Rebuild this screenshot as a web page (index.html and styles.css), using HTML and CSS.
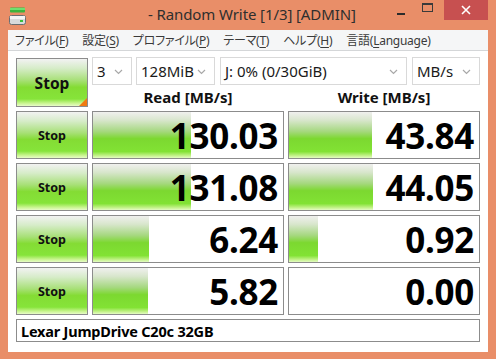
FILE: index.html
```html
<!DOCTYPE html>
<html>
<head>
<meta charset="utf-8">
<link rel="stylesheet" href="styles.css">
</head>
<body>
<div class="window">
  <div class="titlebar">
    <svg class="app-icon" width="17" height="18" viewBox="0 0 17 18">
      <rect x="1" y="0.5" width="15" height="5" rx="1" fill="#3cb43c"/>
      <rect x="1" y="1" width="15" height="2" fill="#6ee06e"/>
      <rect x="0.5" y="8.5" width="16" height="9" rx="2" fill="#d8dadc" stroke="#6a6e72"/>
      <rect x="1" y="9" width="15" height="3" fill="#f4f4f4"/>
      <rect x="11" y="13" width="3" height="2" fill="#38c038"/>
    </svg>
    <div class="title">- Random Write [1/3] [ADMIN]</div>
    <div class="controls">
      <div class="ctl min"><span class="min-line"></span></div>
      <div class="ctl max"><span class="max-box"></span></div>
      <div class="ctl close">
        <svg width="10" height="10" viewBox="0 0 10 10"><path d="M1 1 L9 9 M9 1 L1 9" stroke="#fff" stroke-width="1.6"/></svg>
      </div>
    </div>
  </div>
  <div class="menubar">
    <span class="mi">ファイル(<u>F</u>)</span>
    <span class="mi">設定(<u>S</u>)</span>
    <span class="mi">プロファイル(<u>P</u>)</span>
    <span class="mi">テーマ(<u>T</u>)</span>
    <span class="mi">ヘルプ(<u>H</u>)</span>
    <span class="mi">言語(<u>L</u>anguage)</span>
  </div>
  <div class="client">
    <div class="btn big">Stop</div>
    <div class="top">
      <div class="combos">
        <div class="combo c1"><span>3</span><svg class="chev" width="9" height="6" viewBox="0 0 9 6"><path d="M1 1 L4.5 4.5 L8 1" fill="none" stroke="#a8a8a8" stroke-width="1.2"/></svg></div>
        <div class="combo c2"><span>128MiB</span><svg class="chev" width="9" height="6" viewBox="0 0 9 6"><path d="M1 1 L4.5 4.5 L8 1" fill="none" stroke="#a8a8a8" stroke-width="1.2"/></svg></div>
        <div class="combo c3"><span>J: 0% (0/30GiB)</span><svg class="chev" width="9" height="6" viewBox="0 0 9 6"><path d="M1 1 L4.5 4.5 L8 1" fill="none" stroke="#a8a8a8" stroke-width="1.2"/></svg></div>
        <div class="combo c4"><span>MB/s</span><svg class="chev" width="9" height="6" viewBox="0 0 9 6"><path d="M1 1 L4.5 4.5 L8 1" fill="none" stroke="#a8a8a8" stroke-width="1.2"/></svg></div>
      </div>
      <div class="heads">
        <div class="head">Read [MB/s]</div>
        <div class="head">Write [MB/s]</div>
      </div>
    </div>

    <div class="btn">Stop</div>
    <div class="cell" style="--w:98px">130.03</div>
    <div class="cell" style="--w:83px">43.84</div>

    <div class="btn">Stop</div>
    <div class="cell" style="--w:98px">131.08</div>
    <div class="cell" style="--w:84px">44.05</div>

    <div class="btn">Stop</div>
    <div class="cell" style="--w:56px">6.24</div>
    <div class="cell" style="--w:29px">0.92</div>

    <div class="btn">Stop</div>
    <div class="cell" style="--w:55px">5.82</div>
    <div class="cell" style="--w:0px">0.00</div>

    <div class="name">Lexar JumpDrive C20c 32GB</div>
  </div>
</div>
</body>
</html>
```
FILE: styles.css
```css
html, body {
  margin: 0;
  padding: 0;
}
body {
  width: 496px;
  height: 359px;
  background: #e98e68;
  overflow: hidden;
  font-family: "Noto Sans", "Noto Sans CJK JP", sans-serif;
}
.window {
  width: 496px;
  height: 359px;
  display: flex;
  flex-direction: column;
}
.titlebar {
  height: 30px;
  display: flex;
  align-items: flex-start;
  position: relative;
}
.app-icon {
  margin: 7px 0 0 9px;
}
.title {
  margin: 4px 0 0 122px;
  font-size: 15px;
  color: #2e2e2e;
  letter-spacing: -0.1px;
  white-space: nowrap;
  flex: 1;
}
.controls {
  display: flex;
  margin-right: 8px;
}
.ctl {
  height: 20px;
  display: flex;
  align-items: center;
  justify-content: center;
}
.min {
  width: 26px;
}
.min-line {
  display: block;
  width: 8px;
  height: 2px;
  background: #2b2b2b;
  margin-top: 7px;
}
.max {
  width: 26px;
  margin-right: 4px;
}
.max-box {
  display: block;
  width: 9px;
  height: 6px;
  border: 1px solid #3a3a3a;
  border-top-width: 2px;
  margin-top: -6px;
}
.close {
  width: 44px;
  background: #c75050;
}
.menubar {
  margin: 0 8px;
  height: 20px;
  background: #f5f6f7;
  border-bottom: 1px solid #d4d6d8;
  display: flex;
  align-items: center;
  gap: 14px;
  padding-left: 7px;
  font-family: "Noto Sans", "Noto Sans CJK JP", sans-serif;
  font-feature-settings: "palt";
  font-size: 12px;
  letter-spacing: -0.25px;
  color: #3a3a3a;
}
.mi u {
  text-underline-offset: 2px;
}
.client {
  margin: 0 8px;
  background: #ffffff;
  flex: 1;
  display: grid;
  grid-template-columns: 72px 192px 192px;
  grid-template-rows: 49px 48px 48px 48px 48px 23px;
  gap: 4px;
  padding: 7px 8px 0 8px;
  margin-bottom: 7px;
  align-content: start;
}
.btn {
  box-sizing: border-box;
  border: 1px solid #8c8c8c;
  background: linear-gradient(to bottom, #f2f2f2 0%, #d6ecc8 20%, #a8e078 45%, #84dc34 60%, #86e43a 85%, #c8f48e 94%, #e8fcc8 100%);
  display: flex;
  align-items: center;
  justify-content: center;
  font-weight: bold;
  font-size: 12.5px;
  color: #101010;
  position: relative;
}
.btn.big {
  font-size: 15.5px;
}
.btn.big::after {
  content: "";
  position: absolute;
  right: 0;
  bottom: 0;
  border-style: solid;
  border-width: 0 0 8px 8px;
  border-color: transparent transparent #f07a10 transparent;
}
.top {
  grid-column: 2 / 4;
  display: grid;
  grid-template-rows: 28px 1fr;
  margin-top: -1px;
}
.combos {
  display: flex;
  gap: 4px;
}
.combo {
  box-sizing: border-box;
  height: 28px;
  border: 1px solid #d9d9d9;
  display: flex;
  align-items: center;
  justify-content: space-between;
  padding: 0 8px 0 4px;
  font-size: 15px;
  color: #1a1a1a;
}
.c1 { width: 40px; }
.c2 { width: 79px; margin-right: 1px; }
.c3 { width: 187px; margin-right: 1px; }
.c4 { width: 68px; }
.chev {
  margin-top: 1px;
}
.heads {
  display: grid;
  grid-template-columns: 192px 192px;
  column-gap: 4px;
  align-items: center;
}
.head {
  text-align: center;
  font-weight: bold;
  font-size: 15px;
  color: #111;
  padding-top: 1px;
}
.cell {
  box-sizing: border-box;
  border: 1px solid #8c8c8c;
  background: linear-gradient(to bottom, #f0f0ee 0%, #d8e6cc 18%, #a6d880 42%, #7cd830 58%, #82e234 86%, #c4f28a 95%, #e4fcc4 100%) no-repeat;
  background-size: var(--w) 100%;
  display: flex;
  align-items: center;
  justify-content: flex-end;
  padding-right: 5px;
  font-weight: bold;
  font-size: 35px;
  line-height: 1;
  color: #000;
  letter-spacing: -0.3px;
}
.name {
  grid-column: 1 / 4;
  box-sizing: border-box;
  border: 1px solid #8c8c8c;
  display: flex;
  align-items: center;
  padding-left: 4px;
  font-weight: bold;
  font-size: 14.5px;
  letter-spacing: -0.2px;
  color: #000;
}
```
